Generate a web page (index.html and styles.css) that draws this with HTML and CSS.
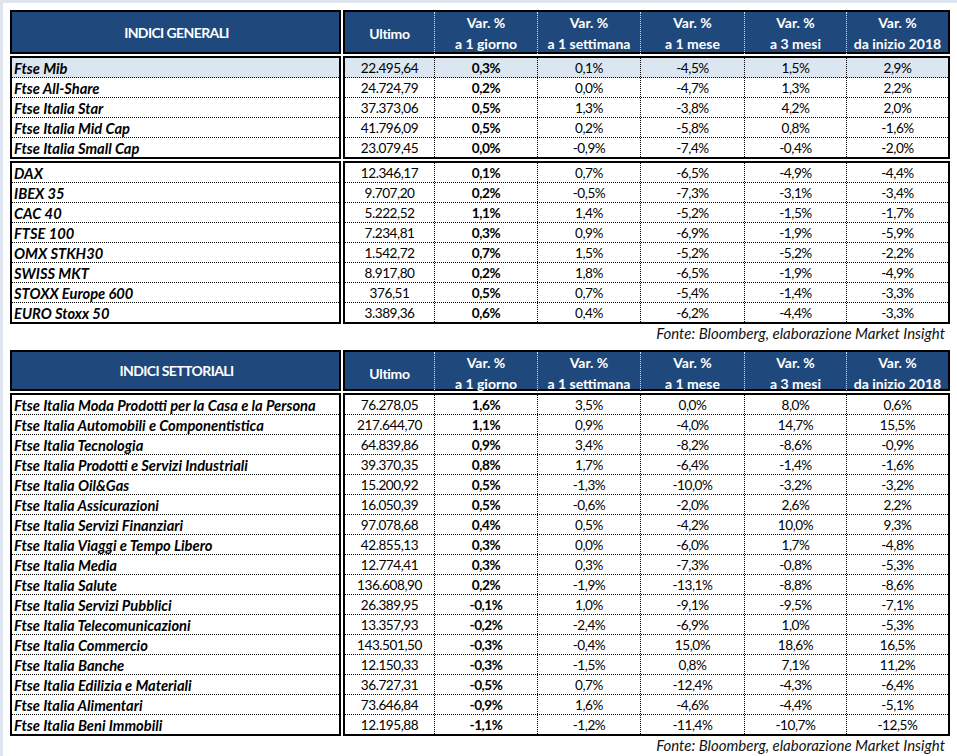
FILE: index.html
```html
<!DOCTYPE html>
<html lang="it">
<head>
<meta charset="utf-8">
<title>Indici</title>
<link rel="stylesheet" href="styles.css">
</head>
<body>
<div class="sheet">

  <div class="band head head-1">
    <div class="box name-box"><div class="title">INDICI GENERALI</div></div>
    <div class="box num-box">
      <div class="hrow">
        <div class="hc">Ultimo</div>
        <div class="hc">Var. %<br>a 1 giorno</div>
        <div class="hc">Var. %<br>a 1 settimana</div>
        <div class="hc">Var. %<br>a 1 mese</div>
        <div class="hc">Var. %<br>a 3 mesi</div>
        <div class="hc">Var. %<br>da inizio 2018</div>
      </div>
    </div>
  </div>

  <div class="band">
    <div class="box name-box">
      <div class="row hl">Ftse Mib</div>
      <div class="row">Ftse All-Share</div>
      <div class="row">Ftse Italia Star</div>
      <div class="row">Ftse Italia Mid Cap</div>
      <div class="row">Ftse Italia Small Cap</div>
    </div>
    <div class="box num-box">
      <div class="row nrow hl"><span>22.495,64</span><span>0,3%</span><span>0,1%</span><span>-4,5%</span><span>1,5%</span><span>2,9%</span></div>
      <div class="row nrow"><span>24.724,79</span><span>0,2%</span><span>0,0%</span><span>-4,7%</span><span>1,3%</span><span>2,2%</span></div>
      <div class="row nrow"><span>37.373,06</span><span>0,5%</span><span>1,3%</span><span>-3,8%</span><span>4,2%</span><span>2,0%</span></div>
      <div class="row nrow"><span>41.796,09</span><span>0,5%</span><span>0,2%</span><span>-5,8%</span><span>0,8%</span><span>-1,6%</span></div>
      <div class="row nrow"><span>23.079,45</span><span>0,0%</span><span>-0,9%</span><span>-7,4%</span><span>-0,4%</span><span>-2,0%</span></div>
    </div>
  </div>

  <div class="band last">
    <div class="box name-box">
      <div class="row">DAX</div>
      <div class="row">IBEX 35</div>
      <div class="row">CAC 40</div>
      <div class="row">FTSE 100</div>
      <div class="row">OMX STKH30</div>
      <div class="row">SWISS MKT</div>
      <div class="row">STOXX Europe 600</div>
      <div class="row">EURO Stoxx 50</div>
    </div>
    <div class="box num-box">
      <div class="row nrow"><span>12.346,17</span><span>0,1%</span><span>0,7%</span><span>-6,5%</span><span>-4,9%</span><span>-4,4%</span></div>
      <div class="row nrow"><span>9.707,20</span><span>0,2%</span><span>-0,5%</span><span>-7,3%</span><span>-3,1%</span><span>-3,4%</span></div>
      <div class="row nrow"><span>5.222,52</span><span>1,1%</span><span>1,4%</span><span>-5,2%</span><span>-1,5%</span><span>-1,7%</span></div>
      <div class="row nrow"><span>7.234,81</span><span>0,3%</span><span>0,9%</span><span>-6,9%</span><span>-1,9%</span><span>-5,9%</span></div>
      <div class="row nrow"><span>1.542,72</span><span>0,7%</span><span>1,5%</span><span>-5,2%</span><span>-5,2%</span><span>-2,2%</span></div>
      <div class="row nrow"><span>8.917,80</span><span>0,2%</span><span>1,8%</span><span>-6,5%</span><span>-1,9%</span><span>-4,9%</span></div>
      <div class="row nrow"><span>376,51</span><span>0,5%</span><span>0,7%</span><span>-5,4%</span><span>-1,4%</span><span>-3,3%</span></div>
      <div class="row nrow"><span>3.389,36</span><span>0,6%</span><span>0,4%</span><span>-6,2%</span><span>-4,4%</span><span>-3,3%</span></div>
    </div>
  </div>

  <p class="source source-1">Fonte: Bloomberg, elaborazione Market Insight</p>

  <div class="band head head-2">
    <div class="box name-box"><div class="title">INDICI SETTORIALI</div></div>
    <div class="box num-box">
      <div class="hrow">
        <div class="hc">Ultimo</div>
        <div class="hc">Var. %<br>a 1 giorno</div>
        <div class="hc">Var. %<br>a 1 settimana</div>
        <div class="hc">Var. %<br>a 1 mese</div>
        <div class="hc">Var. %<br>a 3 mesi</div>
        <div class="hc">Var. %<br>da inizio 2018</div>
      </div>
    </div>
  </div>

  <div class="band last">
    <div class="box name-box">
      <div class="row">Ftse Italia Moda Prodotti per la Casa e la Persona</div>
      <div class="row">Ftse Italia Automobili e Componentistica</div>
      <div class="row">Ftse Italia Tecnologia</div>
      <div class="row">Ftse Italia Prodotti e Servizi Industriali</div>
      <div class="row">Ftse Italia Oil&amp;Gas</div>
      <div class="row">Ftse Italia Assicurazioni</div>
      <div class="row">Ftse Italia Servizi Finanziari</div>
      <div class="row">Ftse Italia Viaggi e Tempo Libero</div>
      <div class="row">Ftse Italia Media</div>
      <div class="row">Ftse Italia Salute</div>
      <div class="row">Ftse Italia Servizi Pubblici</div>
      <div class="row">Ftse Italia Telecomunicazioni</div>
      <div class="row">Ftse Italia Commercio</div>
      <div class="row">Ftse Italia Banche</div>
      <div class="row">Ftse Italia Edilizia e Materiali</div>
      <div class="row">Ftse Italia Alimentari</div>
      <div class="row">Ftse Italia Beni Immobili</div>
    </div>
    <div class="box num-box">
      <div class="row nrow"><span>76.278,05</span><span>1,6%</span><span>3,5%</span><span>0,0%</span><span>8,0%</span><span>0,6%</span></div>
      <div class="row nrow"><span>217.644,70</span><span>1,1%</span><span>0,9%</span><span>-4,0%</span><span>14,7%</span><span>15,5%</span></div>
      <div class="row nrow"><span>64.839,86</span><span>0,9%</span><span>3,4%</span><span>-8,2%</span><span>-8,6%</span><span>-0,9%</span></div>
      <div class="row nrow"><span>39.370,35</span><span>0,8%</span><span>1,7%</span><span>-6,4%</span><span>-1,4%</span><span>-1,6%</span></div>
      <div class="row nrow"><span>15.200,92</span><span>0,5%</span><span>-1,3%</span><span>-10,0%</span><span>-3,2%</span><span>-3,2%</span></div>
      <div class="row nrow"><span>16.050,39</span><span>0,5%</span><span>-0,6%</span><span>-2,0%</span><span>2,6%</span><span>2,2%</span></div>
      <div class="row nrow"><span>97.078,68</span><span>0,4%</span><span>0,5%</span><span>-4,2%</span><span>10,0%</span><span>9,3%</span></div>
      <div class="row nrow"><span>42.855,13</span><span>0,3%</span><span>0,0%</span><span>-6,0%</span><span>1,7%</span><span>-4,8%</span></div>
      <div class="row nrow"><span>12.774,41</span><span>0,3%</span><span>0,3%</span><span>-7,3%</span><span>-0,8%</span><span>-5,3%</span></div>
      <div class="row nrow"><span>136.608,90</span><span>0,2%</span><span>-1,9%</span><span>-13,1%</span><span>-8,8%</span><span>-8,6%</span></div>
      <div class="row nrow"><span>26.389,95</span><span>-0,1%</span><span>1,0%</span><span>-9,1%</span><span>-9,5%</span><span>-7,1%</span></div>
      <div class="row nrow"><span>13.357,93</span><span>-0,2%</span><span>-2,4%</span><span>-6,9%</span><span>1,0%</span><span>-5,3%</span></div>
      <div class="row nrow"><span>143.501,50</span><span>-0,3%</span><span>-0,4%</span><span>15,0%</span><span>18,6%</span><span>16,5%</span></div>
      <div class="row nrow"><span>12.150,33</span><span>-0,3%</span><span>-1,5%</span><span>0,8%</span><span>7,1%</span><span>11,2%</span></div>
      <div class="row nrow"><span>36.727,31</span><span>-0,5%</span><span>0,7%</span><span>-12,4%</span><span>-4,3%</span><span>-6,4%</span></div>
      <div class="row nrow"><span>73.646,84</span><span>-0,9%</span><span>1,6%</span><span>-4,6%</span><span>-4,4%</span><span>-5,1%</span></div>
      <div class="row nrow"><span>12.195,88</span><span>-1,1%</span><span>-1,2%</span><span>-11,4%</span><span>-10,7%</span><span>-12,5%</span></div>
    </div>
  </div>

  <p class="source">Fonte: Bloomberg, elaborazione Market Insight</p>

</div>
</body>
</html>
```

FILE: styles.css
```css
* { box-sizing: border-box; }

html, body {
  margin: 0;
  padding: 0;
  background: #ffffff;
}

body {
  min-height: 100vh;
  border-top: 3px solid #dee5ef;
  border-left: 3px solid #dee5ef;
  font-family: Lato, "Liberation Sans", Arial, sans-serif;
  font-size: 14px;
  color: #000;
}

.sheet {
  padding: 7px 0 0 7px;
  width: 950px;
}

.band {
  display: grid;
  grid-template-columns: 331px 607px;
  column-gap: 2px;
  margin-bottom: 2px;
}

.band.last { margin-bottom: 0; }

.box {
  border: 2px solid #000;
  background: #fff;
}

.head .box {
  background: #1f497d;
  color: #fff;
  font-weight: bold;
}

.head-1 .box { height: 44px; }
.head-2 .box { height: 41px; }

.title {
  height: 100%;
  display: flex;
  align-items: center;
  justify-content: center;
  padding-left: 2px;
  letter-spacing: -0.6px;
}

.hrow {
  height: 100%;
  display: grid;
  grid-template-columns: 90px 103px 103px 104px 102px 101px;
}

.hc {
  display: flex;
  align-items: center;
  justify-content: center;
  text-align: center;
  line-height: 21px;
  border-right: 1px dotted #d5deea;
  white-space: nowrap;
}

.hc:first-child { letter-spacing: -0.3px; }
.hc:last-child { border-right: none; }

.row {
  height: 20px;
  border-bottom: 1px dotted #000;
  display: flex;
  align-items: center;
  padding-left: 2px;
  font-size: 14.7px;
  font-weight: bold;
  font-style: italic;
  white-space: nowrap;
}

.row:last-child {
  height: 19px;
  border-bottom: none;
}

.row.hl { background: #dce6f1; }

.nrow {
  display: grid;
  grid-template-columns: 90px 103px 103px 104px 102px 101px;
  padding-left: 0;
  font-size: 13.6px;
  font-weight: normal;
  font-style: normal;
  align-items: stretch;
  letter-spacing: -0.45px;
}

.nrow span {
  display: flex;
  align-items: center;
  justify-content: center;
  border-right: 1px dotted #000;
}

.nrow span:last-child { border-right: none; }
.nrow span:nth-child(2) { font-weight: bold; }

.source {
  margin: 0;
  width: 938px;
  height: 18px;
  line-height: 18px;
  padding-right: 3px;
  text-align: right;
  font-size: 15px;
  font-style: italic;
  color: #111;
}

.source-1 { margin-bottom: 8px; }
```
